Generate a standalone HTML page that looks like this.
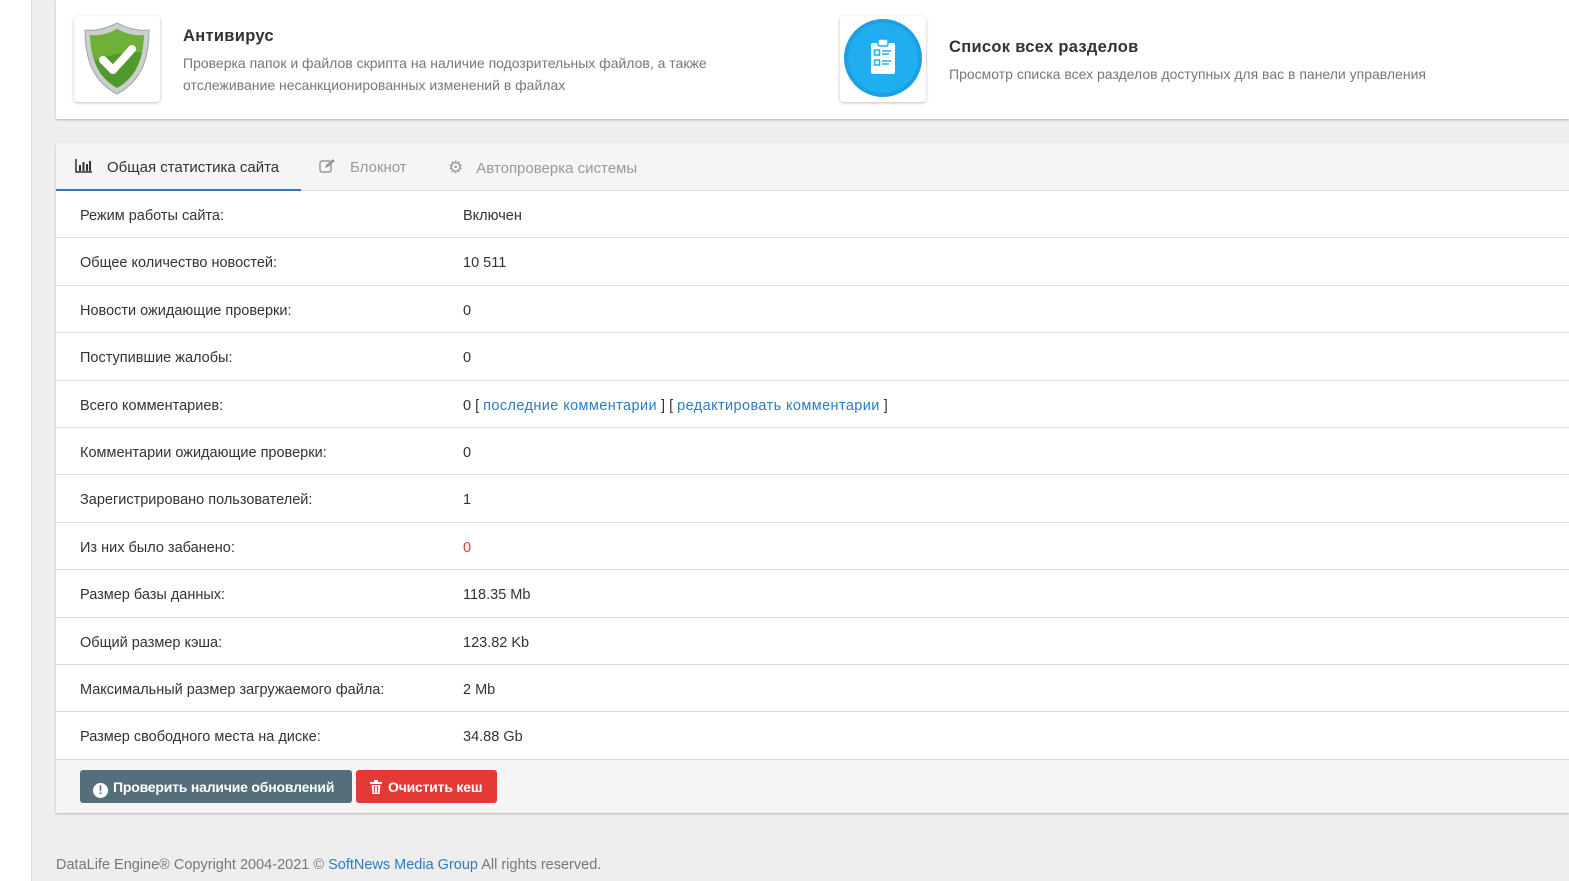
<!DOCTYPE html>
<html><head><meta charset="utf-8"><style>
*{box-sizing:border-box;margin:0;padding:0}
body{width:1569px;height:881px;overflow:hidden;background:#eeeeee;font-family:"Liberation Sans","DejaVu Sans",sans-serif;color:#333;font-size:14px;position:relative}
.side{position:absolute;left:0;top:0;width:32px;height:881px;background:#fff;border-right:1px solid #ddd}
.top{position:absolute;left:56px;top:0;width:1513px;height:119px;background:#fff;box-shadow:0 1px 2px rgba(0,0,0,.25)}
.ib{position:absolute;width:86px;height:86px;border-radius:4px;background:#fff;box-shadow:0 1px 3px rgba(0,0,0,.25)}
.t{position:absolute;font-size:16.5px;color:#333;font-weight:bold;letter-spacing:.3px}
.d{position:absolute;font-size:14px;color:#777;line-height:22px}
.panel{position:absolute;left:56px;top:143px;width:1513px;height:670px;background:#fff;box-shadow:0 1px 2px rgba(0,0,0,.25)}
.tabs{height:48px;background:#f5f5f5;border-bottom:1px solid #ddd;position:relative}
.tab{position:absolute;top:0;height:48px;line-height:50px;font-size:15px;color:#999}
.tab.a{color:#333;border-bottom:2px solid #3a74b0}
.row{height:47.4px;border-bottom:1px solid #ddd;position:relative;font-size:14.5px;line-height:51px}
.row span{position:absolute}
.l{left:24px}.v{left:407px}
a{color:#2c7cc6;text-decoration:none;letter-spacing:.4px}
.foot{position:absolute;left:0;top:616px;width:100%;height:54px;background:#f5f5f5;border-top:1px solid #ddd}
.btn{position:absolute;top:10px;height:33px;border-radius:3px;color:#fff;font-weight:bold;font-size:14px;line-height:35px;padding-left:13px;white-space:nowrap}
.copy{position:absolute;left:56px;top:857px;font-size:14.5px;color:#777}
</style></head><body>
<div class="side"></div>
<div class="top">
 <div class="ib" style="left:18px;top:16px">
  <svg width="86" height="86" viewBox="0 0 86 86"><path d="M43 7 C30 14 20 15 11 14 C11 45 20 66 43 78 C66 66 75 45 75 14 C66 15 56 14 43 7Z" fill="#c9cfca" stroke="#9aa" stroke-width="1"/><path d="M43 13 C32 19 23 20 16 19 C17 45 25 62 43 72 C61 62 69 45 70 19 C63 20 54 19 43 13Z" fill="#4f9a2a"/><path d="M43 13 C32 19 23 20 16 19 C16 30 18 38 21 45 C35 38 52 36 68 36 C69 31 70 25 70 19 C63 20 54 19 43 13Z" fill="#86c045" opacity=".6"/><path d="M29 44 L39 54 L58 33" stroke="#fff" stroke-width="8" fill="none" stroke-linecap="round" stroke-linejoin="round"/></svg>
 </div>
 <div class="t" style="left:127px;top:27px">Антивирус</div>
 <div class="d" style="left:127px;top:52px">Проверка папок и файлов скрипта на наличие подозрительных файлов, а также<br>отслеживание несанкционированных изменений в файлах</div>
 <div class="ib" style="left:784px;top:16px">
  <svg width="86" height="86" viewBox="0 0 86 86"><circle cx="43" cy="42" r="39" fill="#1d9fe0"/><circle cx="43" cy="42" r="35" fill="#20aef0"/><rect x="31" y="27" width="24" height="31" rx="2" fill="#fff"/><rect x="38" y="23" width="10" height="7" rx="2" fill="#fff" stroke="#20aef0" stroke-width="1.5"/><rect x="34.5" y="34" width="5" height="5" fill="none" stroke="#20aef0" stroke-width="1.5"/><rect x="34.5" y="44" width="5" height="5" fill="none" stroke="#20aef0" stroke-width="1.5"/><path d="M42 35h9M42 38h7M42 45h9M42 48h7" stroke="#20aef0" stroke-width="1.5"/></svg>
 </div>
 <div class="t" style="left:893px;top:38px">Список всех разделов</div>
 <div class="d" style="left:893px;top:63px">Просмотр списка всех разделов доступных для вас в панели управления</div>
</div>
<div class="panel">
 <div class="tabs">
  <div class="tab a" style="left:0;width:245px;padding-left:19px;color:#333"><svg width="18" height="14" viewBox="0 0 18 14" style="vertical-align:-1px;margin-right:14px"><path d="M1 0v13h16" stroke="#333" stroke-width="1.5" fill="none"/><rect x="4" y="6" width="2" height="6" fill="#333"/><rect x="7.5" y="3" width="2" height="9" fill="#333"/><rect x="11" y="5" width="2" height="7" fill="#333"/><rect x="14" y="2" width="2" height="10" fill="#333"/></svg>Общая статистика сайта</div>
  <div class="tab" style="left:263px"><svg width="17" height="14" viewBox="0 0 17 14" style="vertical-align:-1px;margin-right:14px"><rect x="1" y="2" width="11" height="11" rx="2" fill="none" stroke="#999" stroke-width="1.5"/><path d="M6 9l1-3 7-6 2 2-7 6z" fill="#999"/></svg>Блокнот</div>
  <div class="tab" style="left:392px"><span style="font-size:17px;margin-right:13px">⚙</span>Автопроверка системы</div>
 </div>
 <div class="row"><span class="l">Режим работы сайта:</span><span class="v">Включен</span></div>
 <div class="row"><span class="l">Общее количество новостей:</span><span class="v">10 511</span></div>
 <div class="row"><span class="l">Новости ожидающие проверки:</span><span class="v">0</span></div>
 <div class="row"><span class="l">Поступившие жалобы:</span><span class="v">0</span></div>
 <div class="row"><span class="l">Всего комментариев:</span><span class="v">0 [ <a>последние комментарии</a> ] [ <a>редактировать комментарии</a> ]</span></div>
 <div class="row"><span class="l">Комментарии ожидающие проверки:</span><span class="v">0</span></div>
 <div class="row"><span class="l">Зарегистрировано пользователей:</span><span class="v">1</span></div>
 <div class="row"><span class="l">Из них было забанено:</span><span class="v" style="color:#e53935">0</span></div>
 <div class="row"><span class="l">Размер базы данных:</span><span class="v">118.35 Mb</span></div>
 <div class="row"><span class="l">Общий размер кэша:</span><span class="v">123.82 Kb</span></div>
 <div class="row"><span class="l">Максимальный размер загружаемого файла:</span><span class="v">2 Mb</span></div>
 <div class="row"><span class="l">Размер свободного места на диске:</span><span class="v">34.88 Gb</span></div>
 <div class="foot">
  <div class="btn" style="left:24px;width:272px;background:#546e7a;letter-spacing:-.2px"><span style="display:inline-block;width:15px;height:15px;border-radius:50%;background:#fff;color:#546e7a;font-size:12px;line-height:15px;text-align:center;vertical-align:-2px;margin-right:5px;letter-spacing:0">!</span>Проверить наличие обновлений</div>
  <div class="btn" style="left:300px;width:141px;background:#e53935;padding-left:14px;letter-spacing:-.2px"><svg width="12" height="14" viewBox="0 0 12 14" style="vertical-align:-2px;margin-right:6px"><rect x="0" y="2" width="12" height="2" fill="#fff"/><rect x="4" y="0" width="4" height="2" fill="#fff"/><path d="M1.5 5h9l-1 9h-7z" fill="#fff"/><path d="M4.5 6v7M7.5 6v7" stroke="#e53935" stroke-width="1"/></svg>Очистить кеш</div>
 </div>
</div>
<div class="copy">DataLife Engine® Copyright 2004-2021 © <a style="letter-spacing:0">SoftNews Media Group</a> All rights reserved.</div>
</body></html>
